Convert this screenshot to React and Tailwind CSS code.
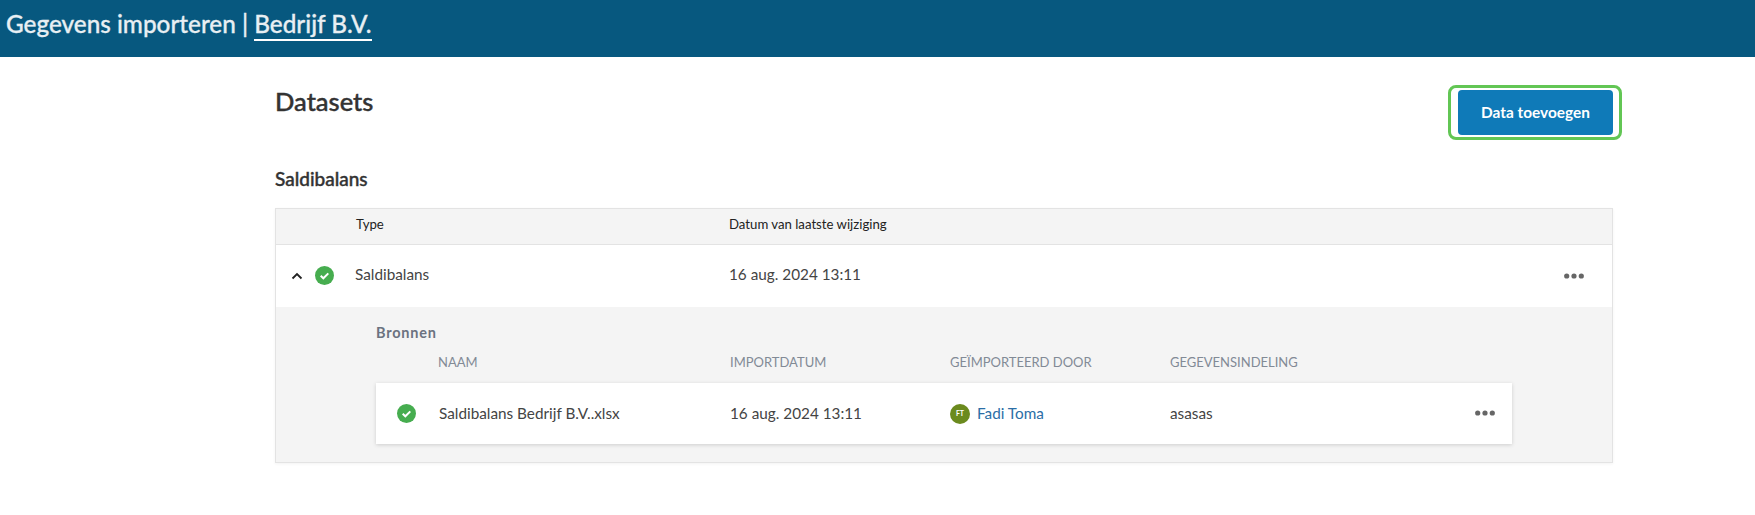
function Check() {
  return (
    <svg width="19" height="19" viewBox="0 0 18 18" className="shrink-0">
      <circle cx="9" cy="9" r="9" fill="#46ad4f" />
      <path d="M5.4 9.2l2.5 2.4 4.7-4.6" fill="none" stroke="#fff" strokeWidth="1.9" />
    </svg>
  );
}
function Dots() {
  return (
    <svg width="20" height="6" viewBox="0 0 20 6" className="shrink-0">
      <circle cx="2.7" cy="3" r="2.6" fill="#666" />
      <circle cx="10" cy="3" r="2.6" fill="#666" />
      <circle cx="17.3" cy="3" r="2.6" fill="#666" />
    </svg>
  );
}
export default function App() {
  return (
    <div className="h-[515px] bg-white font-['Lato','Noto_Sans',sans-serif] text-[#333] overflow-hidden">
      <header className="h-[57px] bg-[#07587f] pl-[6px] pt-[8px] text-[24.3px] leading-[32px] font-medium text-[#e8eff3] [-webkit-text-stroke:0.3px_#e8eff3]">
        Gegevens importeren | <span className="border-b-2 border-white pb-[1px]">Bedrijf B.V.</span>
      </header>
      <main className="ml-[275px] w-[1338px]">
        <div className="flex justify-between h-[83px]">
          <h1 className="mt-[29px] text-[25.5px] leading-[30px] font-medium text-[#333] [-webkit-text-stroke:0.4px_#333]">Datasets</h1>
          <div className="mt-[28px] -mr-[9px] h-[55px] w-[174px] rounded-[8px] border-[3px] border-[#62c654] pl-[7px] pt-[2px]">
            <button className="h-[45px] w-[155px] rounded-[4px] bg-[#0f7ab8] text-[15.4px] font-bold text-white">Data toevoegen</button>
          </div>
        </div>
        <h2 className="h-[68px] pt-[28px] text-[19px] leading-[22px] font-medium text-[#333] [-webkit-text-stroke:0.4px_#333]">Saldibalans</h2>
        <div className="border border-[#e3e3e3] shadow-[0_1px_3px_rgba(0,0,0,0.05)]">
          <div className="flex h-[36px] items-center border-b border-[#e3e3e3] bg-[#f4f4f4] pb-[4px] text-[13.2px] text-[#222]">
            <div className="w-[80px]" />
            <div className="ml-[-4px] w-[377px] pl-[4px]">Type</div>
            <div>Datum van laatste wijziging</div>
          </div>
          <div className="flex h-[62px] items-center pb-[4px] text-[15.3px] text-[#444]">
            <svg width="12" height="8" viewBox="0 0 12 8" className="ml-[15px] mr-[12px] mt-[4px]">
              <path d="M1.5 6.5L6 2l4.5 4.5" fill="none" stroke="#222" strokeWidth="1.8" />
            </svg>
            <div className="mt-[3px]"><Check /></div>
            <div className="ml-[21px] w-[374px]">Saldibalans</div>
            <div className="flex-1">16 aug. 2024 13:11</div>
            <div className="mr-[28px] mt-[3px]"><Dots /></div>
          </div>
          <div className="bg-[#f4f4f4] h-[155px] pl-[100px] pt-[17px]">
            <div className="text-[14.5px] leading-[18px] font-bold tracking-[0.8px] text-[#6b7280]">Bronnen</div>
            <div className="mt-[5px] flex h-[32px] items-center text-[13px] text-[#828a96]">
              <div className="ml-[62px] w-[292px]">NAAM</div>
              <div className="w-[220px]">IMPORTDATUM</div>
              <div className="w-[220px]">GEÏMPORTEERD DOOR</div>
              <div>GEGEVENSINDELING</div>
            </div>
            <div className="mt-[4px] flex h-[61px] w-[1136px] items-center bg-white text-[15.3px] text-[#444] shadow-[0_1px_4px_rgba(0,0,0,0.16)]">
              <div className="ml-[21px] mt-[-1px]"><Check /></div>
              <div className="ml-[23px] w-[291px]">Saldibalans Bedrijf B.V..xlsx</div>
              <div className="w-[220px]">16 aug. 2024 13:11</div>
              <div className="flex w-[220px] items-center gap-[8px]">
                <span className="flex h-[20px] w-[20px] items-center justify-center rounded-full bg-[#6b8a1e] text-[7px] font-bold text-white">FT</span>
                <span className="ml-[-1px] text-[#2b6ea6]">Fadi Toma</span>
              </div>
              <div className="flex-1">asasas</div>
              <div className="mr-[17px] mt-[-1px]"><Dots /></div>
            </div>
          </div>
        </div>
      </main>
    </div>
  );
}
